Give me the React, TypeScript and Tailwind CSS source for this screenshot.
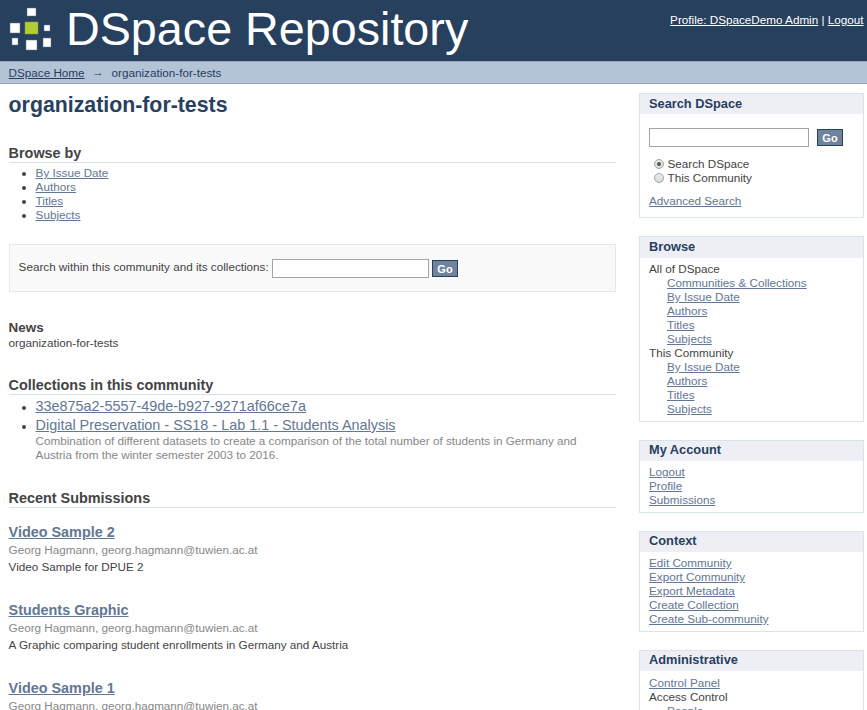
import type { ReactNode } from "react";

function Link({ children }: { children: ReactNode }) {
  return <a href="#" className="text-[#627794] underline">{children}</a>;
}

function Logo() {
  return (
    <svg width="44" height="44" viewBox="8 7 44 44" className="block shrink-0">
      <g fill="#fff" stroke="#64758b" strokeWidth="0.5">
        <rect x="27" y="8" width="9" height="8" />
        <rect x="10" y="23" width="10" height="10" />
        <rect x="44" y="25" width="6" height="6" />
        <rect x="12" y="38" width="6" height="7" />
        <rect x="26" y="40" width="11" height="10" />
        <rect x="43" y="38" width="8" height="9" />
      </g>
      <rect x="25" y="22" width="13" height="12" fill="#b2cd34" stroke="#8a9f43" strokeWidth="0.5" />
    </svg>
  );
}

function GoButton() {
  return (
    <button className="h-[17px] w-[26px] border border-[#27405e] bg-[#6f839c] text-center text-[11px] leading-[16px] font-bold text-white">
      Go
    </button>
  );
}

function Radio({ label, checked }: { label: string; checked?: boolean }) {
  return (
    <label className="flex h-[14px] items-center pl-[5px]">
      <span className="mr-[3.5px] flex size-[10px] items-center justify-center rounded-full border border-[#a3a3a3] bg-linear-to-b from-[#ececec] to-[#dadada]">
        {checked && <span className="size-[4px] rounded-full bg-[#555]" />}
      </span>
      {label}
    </label>
  );
}

function Panel({ title, children, head = "h-[20px] leading-[18px]", body = "pt-[4px] pb-[5px]" }: { title: string; children: ReactNode; head?: string; body?: string }) {
  return (
    <section className="mb-[18px] border border-[#d5e5ea]">
      <h3 className={`bg-[#eeeff5] pl-[9px] text-[12.8px] font-bold text-[#27405e] ${head}`}>{title}</h3>
      <div className={`px-[9px] ${body}`}>{children}</div>
    </section>
  );
}

function Links({ items, indent = "" }: { items: string[]; indent?: string }) {
  return (
    <ul className={indent}>
      {items.map((t) => (
        <li key={t} className="h-[14px]"><Link>{t}</Link></li>
      ))}
    </ul>
  );
}

function SectionTitle({ children }: { children: ReactNode }) {
  return <h2 className="h-[18px] border-b border-[#d8e2e9] text-[14.4px] leading-[17px] font-bold text-[#444]">{children}</h2>;
}

function Submission({ title, text }: { title: string; text: string }) {
  return (
    <article className="h-[78px]">
      <h4 className="h-[18px] text-[14.4px] leading-[18px] font-bold"><Link>{title}</Link></h4>
      <p className="mt-[2px] text-[#888]">Georg Hagmann, georg.hagmann@tuwien.ac.at</p>
      <p className="mt-[3px]">{text}</p>
    </article>
  );
}

const browse = ["By Issue Date", "Authors", "Titles", "Subjects"];

export default function App() {
  return (
    <div className="h-[710px] w-[867px] overflow-hidden bg-[#fefefe] font-['Liberation_Sans',Arial,sans-serif] text-[11.7px] leading-[14px] text-[#444]">
      <header className="flex h-[61px] justify-between bg-[#27405e] pr-[3.5px] pl-[8px] text-white">
        <div className="flex pt-[7px]">
          <Logo />
          <h1 className="-mt-[7px] ml-[14px] text-[46.7px] leading-[58px] whitespace-nowrap">DSpace Repository</h1>
        </div>
        <p className="pt-[13px]">
          <a href="#" className="underline">Profile: DSpaceDemo Admin</a> | <a href="#" className="underline">Logout</a>
        </p>
      </header>
      <nav className="flex h-[23px] border-y border-[#94a4bb] bg-[#b5c3d7] pt-[4px] pl-[8.6px] text-[#27405e]">
        <a href="#" className="underline">DSpace Home</a>
        <span className="-mt-[1px] w-[27px] text-center">→</span>
        <span>organization-for-tests</span>
      </nav>
      <div className="flex justify-between pr-[3px] pl-[8.6px]">
        <main className="w-[607px]">
          <h1 className="mt-[8px] h-[26px] text-[21.3px] leading-[26px] font-bold text-[#27405e]">organization-for-tests</h1>
          <div className="pt-[27px]">
            <SectionTitle>Browse by</SectionTitle>
            <ul className="mt-[3px] list-disc pl-[27px]">
              {browse.map((t) => (
                <li key={t} className="h-[14px]"><Link>{t}</Link></li>
              ))}
            </ul>
          </div>
          <form className="mt-[22px] flex h-[48px] border border-[#e6e7e8] bg-[#f9f9f9] pl-[9px]">
            <label className="mt-[15px] w-[250px] whitespace-nowrap">Search within this community and its collections:</label>
            <input className="mt-[14px] ml-[3.4px] h-[19px] w-[157px] border border-[#a5a5a5] bg-white" />
            <div className="mt-[15px] ml-[3px]"><GoButton /></div>
          </form>
          <h3 className="mt-[28px] h-[16px] text-[13.4px] leading-[16px] font-bold">News</h3>
          <p>organization-for-tests</p>
          <div className="mt-[27px]">
            <SectionTitle>Collections in this community</SectionTitle>
            <ul className="mt-[2px] list-disc pl-[27px]">
              <li className="h-[19px] leading-[19px]"><span className="text-[14.4px]"><Link>33e875a2-5557-49de-b927-9271af66ce7a</Link></span></li>
              <li className="leading-[19px]">
                <span className="text-[14.4px]"><Link>Digital Preservation - SS18 - Lab 1.1 - Students Analysis</Link></span>
                <p className="-mt-[1px] leading-[14px] text-[#888]">
                  Combination of different datasets to create a comparison of the total number of students in Germany and<br />
                  Austria from the winter semester 2003 to 2016.
                </p>
              </li>
            </ul>
          </div>
          <div className="mt-[28px]">
            <SectionTitle>Recent Submissions</SectionTitle>
            <div className="mt-[15px]">
              <Submission title="Video Sample 2" text="Video Sample for DPUE 2" />
              <Submission title="Students Graphic" text="A Graphic comparing student enrollments in Germany and Austria" />
              <Submission title="Video Sample 1" text="" />
            </div>
          </div>
        </main>
        <aside className="w-[225px] pt-[9px]">
          <Panel title="Search DSpace" head="h-[20px] leading-[19px]" body="pt-[14px] pb-[9px]">
            <div className="flex items-center gap-[8px]">
              <input className="h-[19px] w-[160px] border border-[#a5a5a5] bg-white" />
              <GoButton />
            </div>
            <div className="mt-[10px]">
              <Radio label="Search DSpace" checked />
              <Radio label="This Community" />
            </div>
            <p className="mt-[9px]"><Link>Advanced Search</Link></p>
          </Panel>
          <Panel title="Browse" head="h-[21px] leading-[19px]">
            <h4>All of DSpace</h4>
            <Links items={["Communities & Collections", ...browse]} indent="pl-[18px]" />
            <h4>This Community</h4>
            <Links items={browse} indent="pl-[18px]" />
          </Panel>
          <Panel title="My Account">
            <Links items={["Logout", "Profile", "Submissions"]} />
          </Panel>
          <Panel title="Context">
            <Links items={["Edit Community", "Export Community", "Export Metadata", "Create Collection", "Create Sub-community"]} />
          </Panel>
          <Panel title="Administrative" body="pt-[5px] pb-[5px]">
            <Links items={["Control Panel"]} />
            <h4>Access Control</h4>
            <Links items={["People"]} indent="pl-[18px]" />
          </Panel>
        </aside>
      </div>
    </div>
  );
}
